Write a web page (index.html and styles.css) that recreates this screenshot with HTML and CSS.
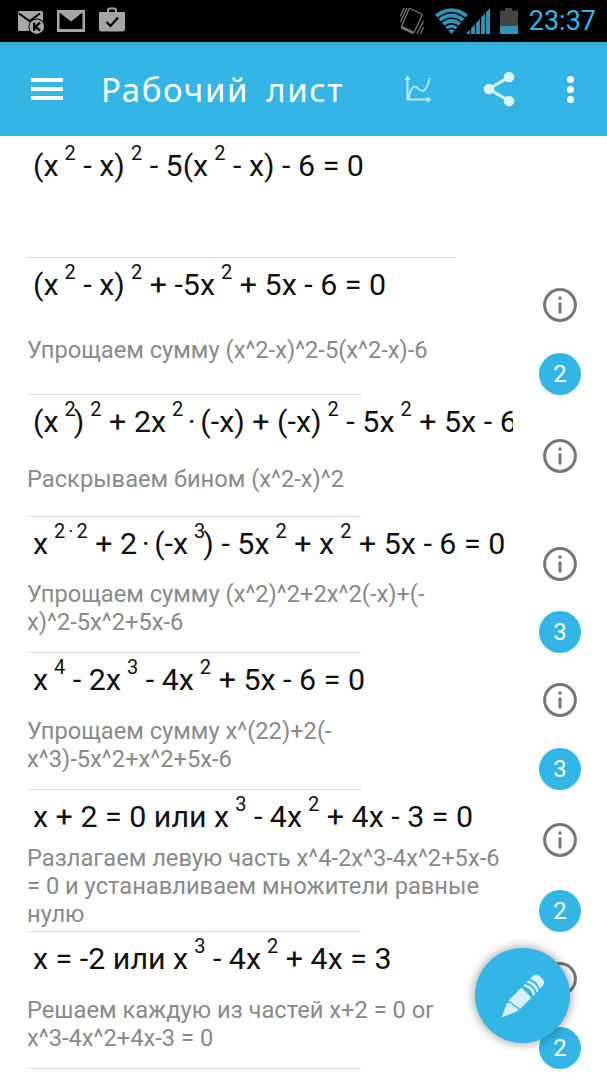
FILE: index.html
```html
<!DOCTYPE html>
<html lang="ru">
<head>
    <meta charset="UTF-8">
    <meta name="viewport" content="width=device-width, initial-scale=1.0">
    <title>Рабочий лист</title>
    <link rel="stylesheet" href="styles.css">
</head>
<body>
    <div class="status-bar">
        <div class="notifications">
            <svg class="icon-mail-k" width="28" height="26" viewBox="0 0 28 26">
                <rect x="1" y="2" width="25" height="20" rx="1.5" fill="#a6a6a6"/>
                <path d="M2 4.500l10.500 7.500 10.500-7.500" fill="none" stroke="#000" stroke-width="2"/>
                <circle cx="19.700" cy="17.700" r="8.300" fill="#000"/>
                <circle cx="19.700" cy="17.700" r="7.300" fill="#a6a6a6"/>
                <path d="M17.200 13.700v8M23 13.700l-4.500 4 4.500 4" fill="none" stroke="#000" stroke-width="2.400"/>
            </svg>
            <svg class="icon-gmail" width="28" height="22" viewBox="0 0 28 22">
                <rect width="28" height="22" fill="#a6a6a6"/>
                <path d="M2.500 2.500l11.500 9 11.500-9V19h-23z" fill="#000"/>
            </svg>
            <svg class="icon-store" width="26" height="25" viewBox="0 0 26 25">
                <path d="M9 6V3.500q0-2 2-2h4q2 0 2 2V6" fill="none" stroke="#a6a6a6" stroke-width="2"/>
                <path d="M0 5h26v17q0 2.500-2.500 2.500h-21Q0 24.500 0 22z" fill="#a6a6a6"/>
                <path d="M7.500 15l4 4L19 10.500" fill="none" stroke="#000" stroke-width="2.200"/>
            </svg>
        </div>
        <div class="system">
            <svg class="icon-vibrate" width="26" height="28" viewBox="0 0 26 28">
                <g fill="none" stroke="#777" stroke-width="1.300">
                    <path d="M11 1.500l11.500 5.500q1 .5.500 1.500l-8 17q-.5 1-1.500.5L3 21q-1-.5-.5-1.500L10 2q.3-.8 1-.5z"/>
                    <path d="M3 20.500l11 5" stroke-width="2.500"/>
                    <path d="M1.500 9l3.500-8M1.500 15L8 1M24.500 14L18 27M24.500 20l-3 7"/>
                </g>
            </svg>
            <svg class="icon-wifi" width="33" height="26" viewBox="0 0 33 26">
                <path d="M0 6.500Q16.500-6 33 6.500L16.500 26z" fill="#3193ba"/>
                <path d="M2.500 10.500Q16.500-1 30.500 10.500M6 14.500Q16.500 6 27 14.500M9.500 18.500Q16.500 13 23.500 18.500M12.500 22Q16.500 19 20.500 22" fill="none" stroke="#000" stroke-width="1.500"/>
            </svg>
            <svg class="icon-signal" width="24" height="26" viewBox="0 0 24 26">
                <path d="M0 26L24 0v26z" fill="#3193ba"/>
                <path d="M4.500 18v8M9.500 12v14M14.500 8v18M19.500 3v23" stroke="#000" stroke-width="1.200"/>
            </svg>
            <svg class="icon-battery" width="18" height="26" viewBox="0 0 18 26">
                <path d="M0 2.500h5V0h7v2.500h6V19H0z" fill="#444"/>
                <rect y="18" width="18" height="8" fill="#3193ba"/>
            </svg>
            <span class="clock">23:37</span>
        </div>
    </div>

    <div class="app-bar">
        <div class="menu-button">
            <span></span>
            <span></span>
            <span></span>
        </div>
        <h1>Рабочий лист</h1>
        <svg class="icon-plot" width="28" height="28" viewBox="0 0 28 28">
            <g fill="none" stroke="#c0e7f7" stroke-width="1.800">
                <path d="M3.500 3v21.500H24" stroke-width="2"/>
                <path d="M4.500 24C6 13 10 9 14 13.500S23 17 25.500 3"/>
            </g>
            <path d="M.500 5l3-4.500 3 4.500zM23 21.500l4.500 3-4.500 3z" fill="#c0e7f7"/>
        </svg>
        <svg class="icon-share" width="32" height="36" viewBox="0 0 32 36">
            <path d="M26 6L6 18l20 12" fill="none" stroke="#dcf3fc" stroke-width="3"/>
            <g fill="#dcf3fc">
                <circle cx="26" cy="6" r="5.300"/>
                <circle cx="6" cy="18" r="5.300"/>
                <circle cx="26" cy="30" r="5.300"/>
            </g>
        </svg>
        <div class="more-button">
            <span></span>
            <span></span>
            <span></span>
        </div>
    </div>

    <div class="worksheet">
        <div class="step source">
            <div class="equation">(x<sup>2</sup> - x)<sup>2</sup> - 5(x<sup>2</sup> - x) - 6 = 0</div>
        </div>
        <div class="step">
            <div class="equation">(x<sup>2</sup> - x)<sup>2</sup> + -5x<sup>2</sup> + 5x - 6 = 0</div>
            <div class="comment">Упрощаем сумму (x^2-x)^2-5(x^2-x)-6</div>
            <div class="side">
                <svg class="info" viewBox="0 0 34 34"><circle cx="17" cy="17" r="15.400"/><path d="M17 8.500v3.300M17 14.500v11"/></svg>
                <span class="count">2</span>
            </div>
        </div>
        <div class="step short">
            <div class="equation">(x<sup class="tight">2</sup>)<sup>2</sup> + 2x<sup>2</sup><span class="dot"> · </span>(-x) + (-x)<sup>2</sup> - 5x<sup>2</sup> + 5x - 6</div>
            <div class="comment">Раскрываем бином (x^2-x)^2</div>
            <div class="side">
                <svg class="info" viewBox="0 0 34 34"><circle cx="17" cy="17" r="15.400"/><path d="M17 8.500v3.300M17 14.500v11"/></svg>
            </div>
        </div>
        <div class="step folded">
            <div class="equation">x<sup>2<span class="dot"> · </span>2</sup> + 2<span class="dot"> · </span>(-x<sup class="tight">3</sup>) - 5x<sup>2</sup> + x<sup>2</sup> + 5x - 6 = 0</div>
            <div class="comment">Упрощаем сумму (x^2)^2+2x^2(-x)+(-<br>x)^2-5x^2+5x-6</div>
            <div class="side">
                <svg class="info" viewBox="0 0 34 34"><circle cx="17" cy="17" r="15.400"/><path d="M17 8.500v3.300M17 14.500v11"/></svg>
                <span class="count">3</span>
            </div>
        </div>
        <div class="step">
            <div class="equation">x<sup>4</sup> - 2x<sup>3</sup> - 4x<sup>2</sup> + 5x - 6 = 0</div>
            <div class="comment">Упрощаем сумму x^(22)+2(-<br>x^3)-5x^2+x^2+5x-6</div>
            <div class="side">
                <svg class="info" viewBox="0 0 34 34"><circle cx="17" cy="17" r="15.400"/><path d="M17 8.500v3.300M17 14.500v11"/></svg>
                <span class="count">3</span>
            </div>
        </div>
        <div class="step tall">
            <div class="equation">x + 2 = 0 или x<sup>3</sup> - 4x<sup>2</sup> + 4x - 3 = 0</div>
            <div class="comment">Разлагаем левую часть x^4-2x^3-4x^2+5x-6<br>= 0 и устанавливаем множители равные<br>нулю</div>
            <div class="side">
                <svg class="info" viewBox="0 0 34 34"><circle cx="17" cy="17" r="15.400"/><path d="M17 8.500v3.300M17 14.500v11"/></svg>
                <span class="count">2</span>
            </div>
        </div>
        <div class="step">
            <div class="equation">x = -2 или x<sup>3</sup> - 4x<sup>2</sup> + 4x = 3</div>
            <div class="comment">Решаем каждую из частей x+2 = 0 or<br>x^3-4x^2+4x-3 = 0</div>
            <div class="side">
                <svg class="info" viewBox="0 0 34 34"><circle cx="17" cy="17" r="15.400"/><path d="M17 8.500v3.300M17 14.500v11"/></svg>
                <span class="count">2</span>
            </div>
        </div>
    </div>

    <div class="edit-button">
        <svg width="44" height="44" viewBox="0 0 44 44">
            <g fill="#d6f1fb">
                <path d="M.500 43.500L6 29q2.500-1 4.500 1 1 2 3.500 2.500 3 1 3 4.500z"/>
                <path d="M7.500 26.500L20.500 13.500 30.500 23.500 18.500 35.500q-.5-3-4-4-2.500-.5-3-2.500-2-1.500-4-2.500z"/>
                <path d="M22 12l2-2q8 2 10.500 10l-2.500 2q-2-8-10-10z"/>
                <path d="M25.500 8.500l2-2q8 2 10 10l-2 2q-2-8-10-10z"/>
                <path d="M29 5l3-3q3-2.500 6.500 0l3 3q3 3 .5 6.500l-3.500 3.500Q36.500 7 29 5z"/>
            </g>
        </svg>
    </div>
</body>
</html>
```
FILE: styles.css
```css
body {
    margin: 0;
    height: 1080px;
    overflow: hidden;
    font-family: Roboto, sans-serif;
    background-color: #fff;
}
svg {
    display: block;
    flex-shrink: 0;
}
.status-bar {
    display: flex;
    justify-content: space-between;
    height: 42px;
    padding: 0 11px 0 17px;
    background-color: #000;
}
.notifications,
.system {
    display: flex;
    align-items: flex-start;
}
.icon-mail-k {
    margin-top: 9px;
}
.icon-gmail {
    margin: 10px 14px 0 12px;
}
.icon-store {
    margin-top: 7px;
}
.icon-vibrate {
    margin: 7px 10px 0 0;
}
.icon-wifi {
    margin-top: 8px;
}
.icon-signal {
    margin: 8px 10px 0 -2px;
}
.icon-battery {
    margin: 8px 11px 0 0;
}
.clock {
    color: #33b5e5;
    font-size: 27px;
    line-height: 43px;
}
.app-bar {
    display: flex;
    align-items: center;
    height: 94px;
    margin-bottom: 1px;
    padding: 0 33px 0 31px;
    box-sizing: border-box;
    background: linear-gradient(#37a9d5, #33b5e5 8px);
}
.menu-button {
    display: flex;
    flex-direction: column;
    gap: 5px;
    width: 32px;
}
.menu-button span {
    height: 4px;
    background-color: #fff;
}
.app-bar h1 {
    flex: 1;
    margin: 0 0 0 38px;
    color: #fff;
    font-family: "Noto Sans", sans-serif;
    font-size: 33px;
    font-weight: normal;
    letter-spacing: 1.6px;
    word-spacing: 7px;
    white-space: nowrap;
}
.icon-share {
    margin: 0 52px 0 51px;
}
.more-button {
    display: flex;
    flex-direction: column;
    gap: 3px;
}
.more-button span {
    width: 7px;
    height: 7px;
    border-radius: 50%;
    background-color: #fff;
}
.step {
    display: grid;
    grid-template-columns: 486px 94px;
    grid-template-rows: 46px 1fr;
    height: 137px;
    padding-left: 27px;
    box-sizing: border-box;
    /* divider only runs part of the row */
    background: linear-gradient(#ddd, #ddd) 27px 100% / 334px 1px no-repeat;
}
.source {
    height: 121px;
    background-size: 428px 1px;
}
.short {
    height: 122px;
}
.folded {
    height: 136px;
}
.tall {
    height: 142px;
}
.equation {
    align-self: start;
    padding-left: 6px;
    overflow: hidden;
    color: #111;
    font-size: 30.4px;
    line-height: 53px;
    white-space: nowrap;
}
.source .equation {
    line-height: 58px;
}
.equation sup {
    position: relative;
    top: -16px;
    margin-left: 6px;
    font-size: 20px;
    line-height: 0;
    vertical-align: baseline;
}
.equation .tight {
    margin-right: -2px;
}
.equation .dot {
    word-spacing: -3px;
}
.equation sup .dot {
    word-spacing: -2px;
}
.comment {
    align-self: center;
    grid-row: 2;
    color: #8a8a8a;
    font-size: 23.7px;
    line-height: 28px;
    white-space: nowrap;
}
.tall .comment {
    margin-top: 4px;
}
.side {
    display: flex;
    grid-column: 2;
    grid-row: 1 / 3;
    flex-direction: column;
    align-items: center;
    justify-content: space-between;
    padding: 30px 0 0;
}
.short .side {
    justify-content: center;
    padding: 0;
}
.tall .side {
    padding: 33px 0 0;
}
.info {
    width: 34px;
    height: 34px;
    fill: none;
    stroke: #777;
    stroke-width: 3;
}
.count {
    width: 42px;
    height: 42px;
    border-radius: 50%;
    background-color: #33b5e5;
    color: #fff;
    font-size: 24px;
    line-height: 43px;
    text-align: center;
}
/* floats over the list */
.edit-button {
    position: absolute;
    right: 37px;
    bottom: 37px;
    display: flex;
    align-items: center;
    justify-content: center;
    width: 95px;
    height: 95px;
    border-radius: 50%;
    background-color: #33b5e5;
    box-shadow: 0 0 9px 2px rgba(0, 0, 0, 0.3);
}
```
